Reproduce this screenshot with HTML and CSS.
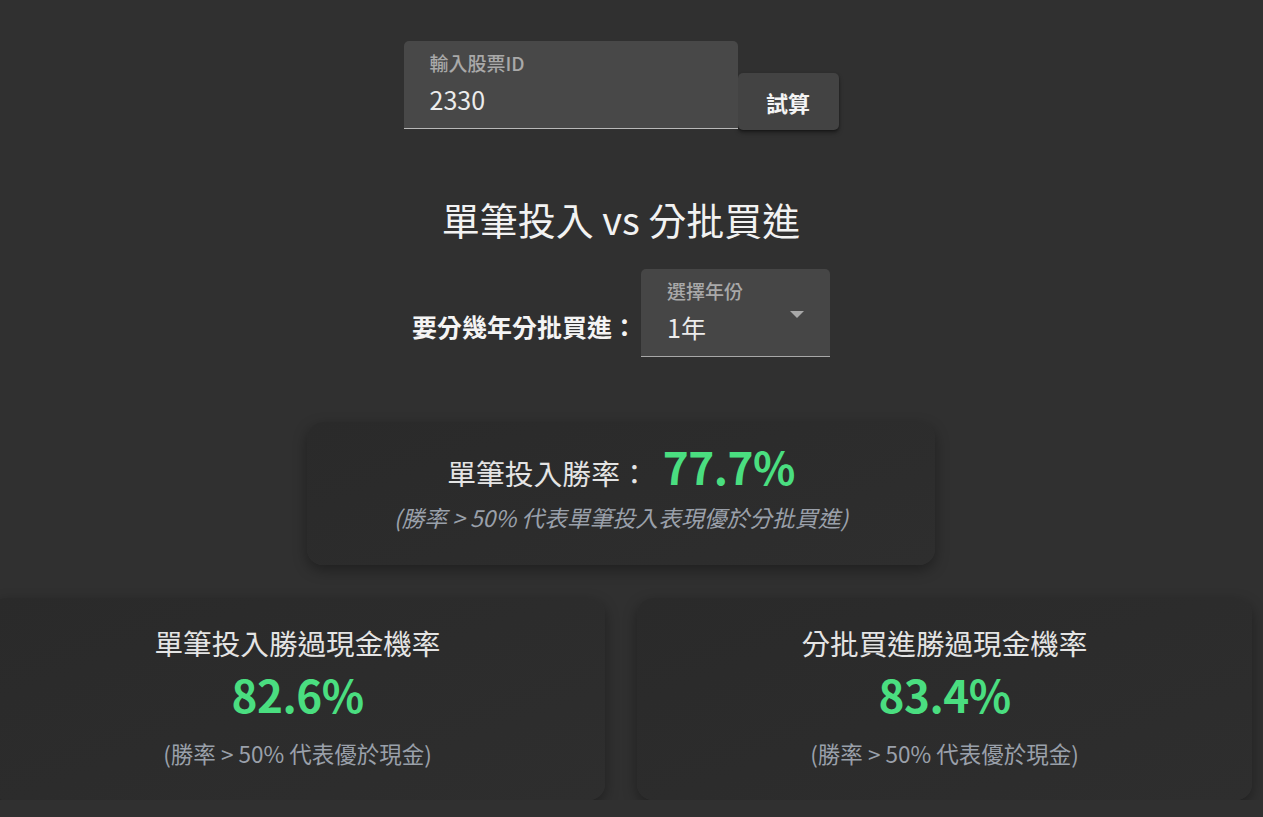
FILE: index.html
```html
<!DOCTYPE html>
<html lang="zh-Hant">
<head>
<meta charset="utf-8">
<title>單筆投入 vs 分批買進</title>
<link rel="stylesheet" href="styles.css">
</head>
<body>
<div class="page">
  <div class="search">
    <div class="field field-input">
      <span class="field-label">輸入股票ID</span>
      <span class="field-value">2330</span>
    </div>
    <button class="btn">試算</button>
  </div>

  <h1 class="title">單筆投入 vs 分批買進</h1>

  <div class="year-row">
    <span class="year-label">要分幾年分批買進：</span>
    <div class="field field-select">
      <span class="field-label">選擇年份</span>
      <span class="field-value">1年</span>
      <svg class="arrow" width="14" height="7" viewBox="0 0 14 7"><path d="M0 0 L14 0 L7 7 Z" fill="#a8a8a8"/></svg>
    </div>
  </div>

  <div class="main-card">
    <div class="main-row">
      <span class="main-label">單筆投入勝率：</span>
      <span class="pct">77.7%</span>
    </div>
    <div class="note note-italic">(勝率 &gt; 50% 代表單筆投入表現優於分批買進)</div>
  </div>

  <div class="cards">
    <div class="card">
      <div class="card-title">單筆投入勝過現金機率</div>
      <div class="pct">82.6%</div>
      <div class="note">(勝率 &gt; 50% 代表優於現金)</div>
    </div>
    <div class="card">
      <div class="card-title">分批買進勝過現金機率</div>
      <div class="pct">83.4%</div>
      <div class="note">(勝率 &gt; 50% 代表優於現金)</div>
    </div>
  </div>
</div>
</body>
</html>
```

FILE: styles.css
```css
html, body {
  margin: 0;
  padding: 0;
  background: #303030;
  overflow: hidden;
}
body {
  font-family: "Noto Sans CJK TC", "Noto Sans", sans-serif;
  color: #ececec;
}
.page {
  width: 1242px;
  display: flex;
  flex-direction: column;
  align-items: center;
}
.search {
  display: flex;
  align-items: flex-end;
  padding-top: 41px;
}
.field {
  position: relative;
  box-sizing: border-box;
  height: 88px;
  background: #484848;
  border-radius: 5px 5px 0 0;
  border-bottom: 1px solid #b8b8b8;
  padding: 8px 26px 0;
  display: flex;
  flex-direction: column;
}
.field-input {
  width: 334px;
}
.field-select {
  width: 189px;
  background: #464646;
  border-bottom-color: #a8a8a8;
}
.field-label {
  font-size: 19px;
  line-height: 28px;
  color: #a9a9a9;
  font-weight: 500;
}
.field-value {
  font-size: 25px;
  line-height: 36px;
  color: #ececec;
  margin-top: 4px;
}
.arrow {
  position: absolute;
  right: 26px;
  top: 42px;
}
.btn {
  width: 101px;
  height: 57px;
  border: none;
  border-radius: 5px;
  background: #434343;
  color: #f4f4f4;
  font-family: inherit;
  font-size: 22px;
  font-weight: 700;
  box-shadow: 0 3px 4px rgba(0,0,0,0.35), 0 1px 2px rgba(0,0,0,0.3);
  margin-bottom: -1px;
  padding: 0;
}
.title {
  margin: 67px 0 0;
  font-size: 38px;
  line-height: 46px;
  font-weight: 400;
  color: #f2f2f2;
}
.year-row {
  margin-top: 27px;
  display: flex;
  align-items: flex-end;
  gap: 4px;
}
.year-label {
  font-size: 25px;
  font-weight: 700;
  color: #f4f4f4;
  line-height: 30px;
  padding-bottom: 16px;
}
.main-card {
  margin-top: 65px;
  width: 628px;
  box-sizing: border-box;
  padding: 18px 24px 34px;
  border-radius: 16px;
  background: linear-gradient(160deg, #2a2a2a, #2e2e2e);
  box-shadow: 0 5px 14px rgba(0,0,0,0.35);
  display: flex;
  flex-direction: column;
  align-items: center;
}
.main-row {
  display: flex;
  align-items: baseline;
  gap: 14px;
}
.main-label {
  font-size: 28.8px;
  font-weight: 400;
  color: #e4e4e4;
}
.pct {
  font-size: 44px;
  line-height: 53px;
  font-weight: 700;
  color: #4ade80;
  letter-spacing: -0.5px;
}
.note {
  font-size: 22.5px;
  line-height: 26px;
  color: #9aa0aa;
}
.note-italic {
  font-style: italic;
  font-size: 22.8px;
  margin-top: 12px;
}
.cards {
  margin-top: 33px;
  width: 1262px;
  display: grid;
  grid-template-columns: 1fr 1fr;
  gap: 32px;
}
.card {
  height: 202px;
  box-sizing: border-box;
  padding-top: 28px;
  border-radius: 16px;
  background: linear-gradient(160deg, #2a2a2a, #2e2e2e);
  box-shadow: 0 5px 14px rgba(0,0,0,0.35);
  display: flex;
  flex-direction: column;
  align-items: center;
}
.card-title {
  font-size: 28.6px;
  line-height: 34px;
  font-weight: 400;
  color: #e4e4e4;
}
.card .pct {
  margin-top: 8px;
}
.card .note {
  margin-top: 19px;
}
```
